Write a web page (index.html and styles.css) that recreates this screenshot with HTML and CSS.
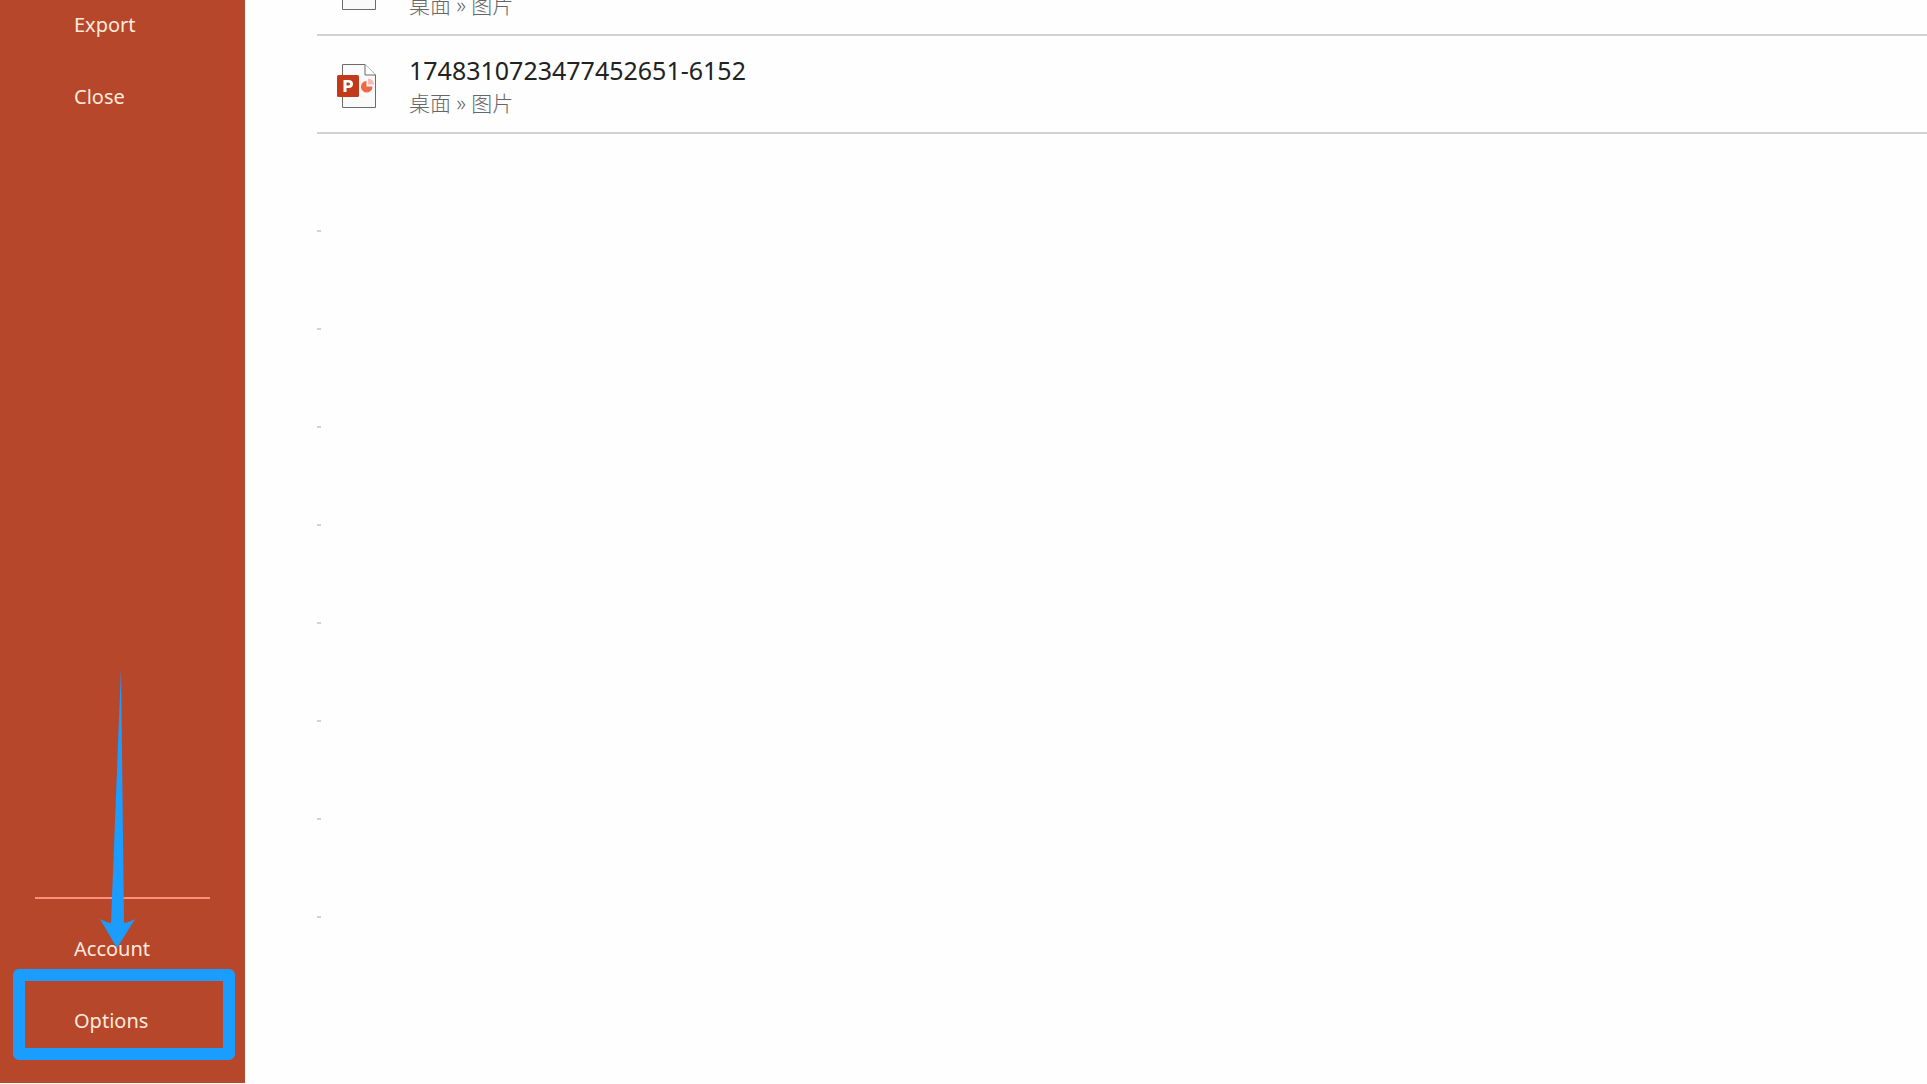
FILE: index.html
```html
<!DOCTYPE html>
<html lang="en">
<head>
<meta charset="utf-8">
<title>PowerPoint</title>
<link rel="stylesheet" href="styles.css">
</head>
<body>
<div class="backstage">
  <nav class="sidebar">
    <div class="menu">
      <button type="button" class="menu-item">Export</button>
      <button type="button" class="menu-item">Close</button>
    </div>
    <div class="menu menu-bottom">
      <button type="button" class="menu-item">Account</button>
      <button type="button" class="menu-item">Options</button>
    </div>
    <svg class="arrow" viewBox="0 0 36 280" aria-hidden="true">
      <path d="M21 0 L24 255 Q30 254 35 251 L17 280 L0 251 Q5 254 11 255 Z" fill="#1b9cff"/>
    </svg>
    <div class="highlight"></div>
  </nav>
  <main class="content">
    <ul class="files">
      <li class="file">
        <svg class="file-icon" viewBox="0 0 40 46" aria-hidden="true">
          <path d="M5.500 .5H28L38.500 11V43.500H5.500Z" fill="#fafafa" stroke="#6b6b6b"/>
        </svg>
        <div class="file-text"><span class="path" lang="zh">桌面 » 图片</span></div>
      </li>
      <li class="file">
        <svg class="file-icon" viewBox="0 0 40 46" aria-hidden="true">
          <path d="M5.500 .5H28L38.500 11V43.500H5.500Z" fill="#fafafa" stroke="#6b6b6b"/>
          <path d="M28 .5V11H38.500" fill="#fff" stroke="#6b6b6b"/>
          <path d="M29.500 17V22.500H35.500A5.800 5.800 0 1 1 29.500 17Z" fill="#ec6a48"/>
          <path d="M31 14.500A6 6 0 0 1 37 20.500H31Z" fill="#f8b9b3"/>
          <rect y="11" width="22" height="22" rx="1.500" fill="#c13b1b"/>
          <path fill-rule="evenodd" d="M6.500 16H11.500Q16 16 16 20T11.500 24H9.500V28H6.500ZM9.500 18.500V21.600H11.200Q13 21.600 13 20T11.200 18.500Z" fill="#fff"/>
        </svg>
        <div class="file-text"><span class="name">1748310723477452651-6152</span><span class="path" lang="zh">桌面 » 图片</span></div>
      </li>
      <li class="file empty"></li>
      <li class="file empty"></li>
      <li class="file empty"></li>
      <li class="file empty"></li>
      <li class="file empty"></li>
      <li class="file empty"></li>
      <li class="file empty"></li>
      <li class="file empty"></li>
    </ul>
  </main>
</div>
</body>
</html>
```
FILE: styles.css
```css
* { box-sizing: border-box; }
body {
  margin: 0;
  background: #fefefe;
  font-family: "Noto Sans", "Noto Sans CJK SC", sans-serif;
}
.backstage {
  display: flex;
  min-height: 100vh;
  padding-bottom: 1px;
  overflow: hidden;
}
.sidebar {
  position: relative;
  display: flex;
  flex: none;
  flex-direction: column;
  justify-content: space-between;
  width: 245px;
  padding-bottom: 26px;
  background: #b7472a;
}
.menu { display: flex; flex-direction: column; }
/* The menu is scrolled part of the way through its first item */
.menu:first-child { margin-top: -11px; }
.menu-bottom::before {
  content: "";
  height: 2px;
  margin: 0 35px 14px;
  background: #ff8f78;
}
.menu-item {
  height: 72px;
  padding: 0 0 0 74px;
  border: 0;
  background: none;
  color: #ffeadf;
  font: inherit;
  font-size: 20px;
  line-height: 28px;
  text-align: left;
}
.arrow {
  position: absolute;
  bottom: 135px;
  left: 100px;
  width: 36px;
  height: 280px;
}
.highlight {
  position: absolute;
  bottom: 23px;
  left: 13px;
  width: 222px;
  height: 91px;
  border: 12px solid #1b9cff;
  border-radius: 6px;
  pointer-events: none;
}
.content { flex: 1; min-width: 0; padding-left: 72px; }
.files {
  margin: -62px 0 0;
  padding: 0;
  list-style: none;
}
.file {
  display: flex;
  align-items: flex-end;
  gap: 32px;
  height: 98px;
  padding: 0 0 14px 20px;
  border-bottom: 2px solid #d2d2d2;
}
.file-icon { flex: none; width: 40px; height: 46px; margin-bottom: 8px; }
.file-text { display: flex; flex-direction: column; }
.name { color: #222; font-size: 25px; line-height: 36px; }
.path {
  color: #666;
  font-size: 21px;
  font-weight: 300;
  line-height: 30px;
}
.empty { width: 4px; padding: 0; }
```
